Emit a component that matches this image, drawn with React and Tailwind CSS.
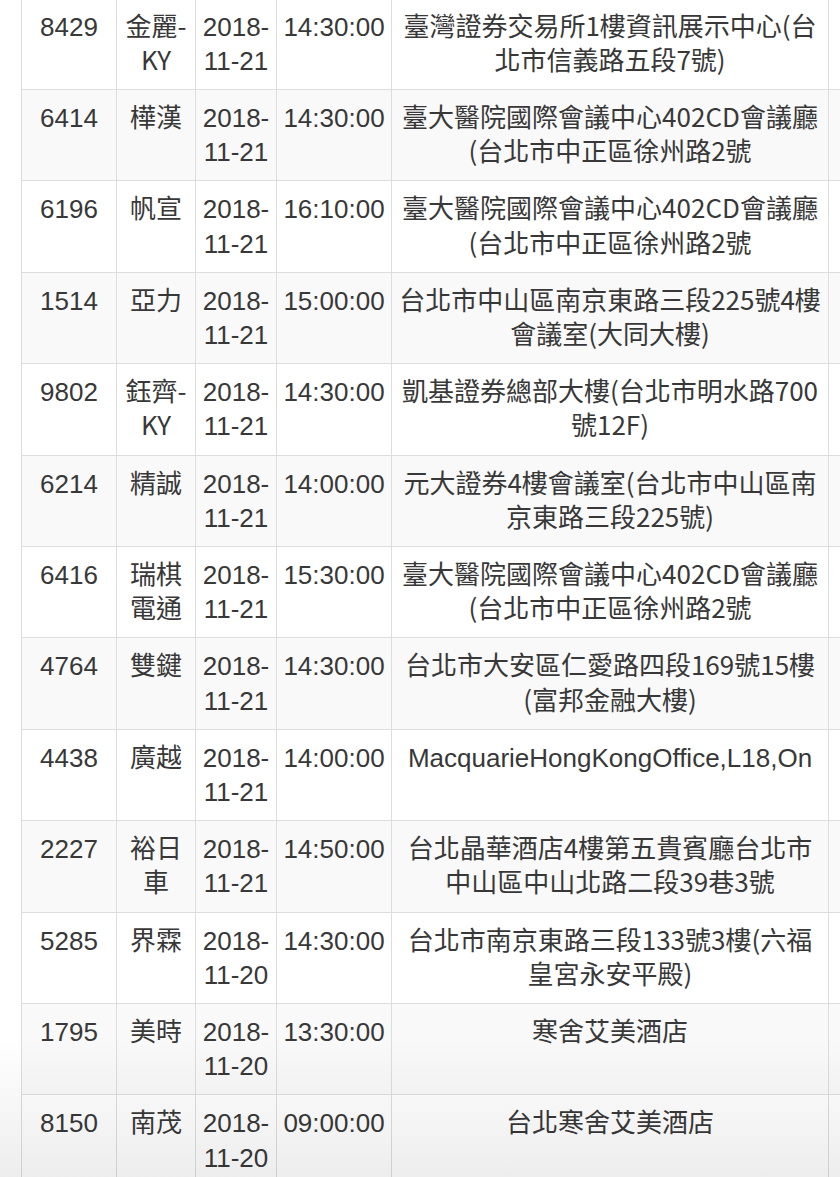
import React from "react";

const rows = [
  ["8429", ["金麗-", "KY"], "11-21", "14:30:00", ["臺灣證券交易所1樓資訊展示中心(台", "北市信義路五段7號)"]],
  ["6414", ["樺漢"], "11-21", "14:30:00", ["臺大醫院國際會議中心402CD會議廳", "(台北市中正區徐州路2號"]],
  ["6196", ["帆宣"], "11-21", "16:10:00", ["臺大醫院國際會議中心402CD會議廳", "(台北市中正區徐州路2號"]],
  ["1514", ["亞力"], "11-21", "15:00:00", ["台北市中山區南京東路三段225號4樓", "會議室(大同大樓)"]],
  ["9802", ["鈺齊-", "KY"], "11-21", "14:30:00", ["凱基證券總部大樓(台北市明水路700", "號12F)"]],
  ["6214", ["精誠"], "11-21", "14:00:00", ["元大證券4樓會議室(台北市中山區南", "京東路三段225號)"]],
  ["6416", ["瑞棋", "電通"], "11-21", "15:30:00", ["臺大醫院國際會議中心402CD會議廳", "(台北市中正區徐州路2號"]],
  ["4764", ["雙鍵"], "11-21", "14:30:00", ["台北市大安區仁愛路四段169號15樓", "(富邦金融大樓)"]],
  ["4438", ["廣越"], "11-21", "14:00:00", ["MacquarieHongKongOffice,L18,On"], true],
  ["2227", ["裕日", "車"], "11-21", "14:50:00", ["台北晶華酒店4樓第五貴賓廳台北市", "中山區中山北路二段39巷3號"]],
  ["5285", ["界霖"], "11-20", "14:30:00", ["台北市南京東路三段133號3樓(六福", "皇宮永安平殿)"]],
  ["1795", ["美時"], "11-20", "13:30:00", ["寒舍艾美酒店"]],
  ["8150", ["南茂"], "11-20", "09:00:00", ["台北寒舍艾美酒店"]],
];

const latin =
  "font-['Liberation_Sans','Noto_Sans_CJK_TC',sans-serif] pt-[11px] pb-[11px]";
const cjk = "font-['Noto_Sans_CJK_TC','Liberation_Sans',sans-serif] pt-[9px] pb-[13px]";
const cell =
  "border border-[#dddddd] px-[4px] align-top text-center leading-[34.2px] text-[26px] text-[#383838]";

function Lines({ lines }) {
  return lines.map((l, i) => (
    <span key={i} className="block whitespace-nowrap">
      {l}
    </span>
  ));
}

export default function App() {
  return (
    <div className="relative h-[1177px] w-[840px] overflow-hidden bg-white">
      <table className="-mt-[4px] ml-[21px] table-fixed border-collapse w-[907px]">
        <colgroup>
          <col className="w-[95px]" />
          <col className="w-[79px]" />
          <col className="w-[81px]" />
          <col className="w-[115px]" />
          <col className="w-[437px]" />
          <col className="w-[100px]" />
        </colgroup>
        <tbody>
          <tr className="h-[2px] bg-white">
            {[0, 1, 2, 3, 4, 5].map((i) => (
              <td key={i} className="h-[2px] p-0 border-x border-b border-[#dddddd]" />
            ))}
          </tr>
          {rows.map((r, idx) => {
            const bg = idx % 2 === 0 ? "bg-white" : "bg-[#f9f9f9]";
            return (
              <tr key={idx} className={bg}>
                <td className={`${cell} ${latin}`}>{r[0]}</td>
                <td className={`${cell} ${cjk}`}>
                  <Lines lines={r[1]} />
                </td>
                <td className={`${cell} ${latin}`}>
                  <span className="block whitespace-nowrap">2018-</span>
                  <span className="block whitespace-nowrap">{r[2]}</span>
                </td>
                <td className={`${cell} ${latin}`}>{r[3]}</td>
                <td className={`${cell} ${r[5] ? latin : cjk} overflow-hidden`}>
                  <Lines lines={r[4]} />
                </td>
                <td className={`${cell} ${latin}`}></td>
              </tr>
            );
          })}
          <tr className="bg-[#f9f9f9]">
            {[0, 1, 2, 3, 4, 5].map((i) => (
              <td key={i} className={`${cell} ${latin}`}>
                <span className="block">&nbsp;</span>
                <span className="block">&nbsp;</span>
              </td>
            ))}
          </tr>
        </tbody>
      </table>
      <div className="pointer-events-none absolute inset-x-0 bottom-0 h-[140px] bg-gradient-to-b from-transparent to-black/[0.07]" />
    </div>
  );
}
